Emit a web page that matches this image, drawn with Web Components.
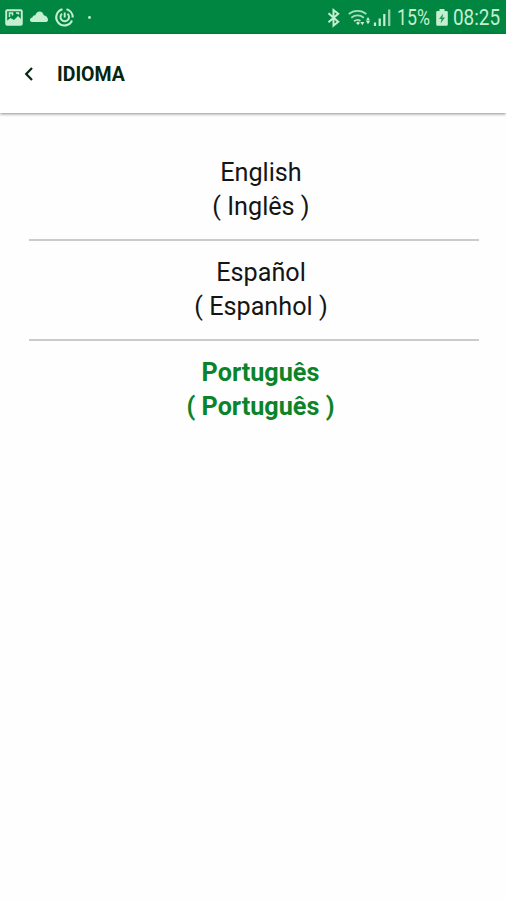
<!DOCTYPE html>
<html lang="pt">
<head>
<meta charset="utf-8">
<title>Idioma</title>
<style>
  body {
    margin: 0;
    background: #fefefe;
    font-family: Roboto, "Liberation Sans", sans-serif;
  }
</style>
</head>
<body>
<status-bar battery="15%" time="08:25"></status-bar>
<app-header>IDIOMA</app-header>
<language-list>
  <language-item>English<span slot="translation">( Inglês )</span></language-item>
  <language-item>Español<span slot="translation">( Espanhol )</span></language-item>
  <language-item selected>Português<span slot="translation">( Português )</span></language-item>
</language-list>

<script>
class StatusBar extends HTMLElement {
  constructor() {
    super();
    this.attachShadow({ mode: "open" });
    this.shadowRoot.innerHTML = `
      <style>${this.#cssStyles()}</style>
      <svg width="100" height="34" viewBox="0 0 100 34" fill="none" stroke="currentColor">
        <rect x="6.2" y="10.2" width="15.6" height="14.6" rx="1" stroke-width="1.9"/>
        <path d="M6 21.5l4.5-3.5 3.5 2 4-4 4 4v5H6z" fill="currentColor" stroke="none"/>
        <path d="M9.5 17v-4h3v2.5M16 13h2.5v1.5" stroke-width="1.5"/>
        <path d="M32 22c-1.3 0-2-.8-2-2 0-1.3 1-2.3 2.4-2.5.5-1.8 1.5-2.5 2.9-2.3 1-2.5 2.3-3.7 4.2-3.7 2.3 0 3.8 1.5 4.2 3.8 2.4.2 4.3 2.3 4.3 4.5 0 1.5-.8 2.2-2 2.2z" fill="currentColor" stroke="none"/>
        <path d="M62.5 9.3A8.2 8.2 0 1 0 72 20.5M66.5 9.3A8.2 8.2 0 0 1 72.7 17.5" stroke-width="2.1"/>
        <path d="M62 13.7a4.3 4.3 0 1 0 5.5 0M64.7 12.5v5" stroke-width="1.9"/>
        <circle cx="89.5" cy="17.5" r="1.4" fill="currentColor" stroke="none"/>
      </svg>
      <div class="right">
        <svg width="70" height="34" viewBox="325 0 70 34" fill="none" stroke="currentColor">
          <path d="M328.5 13.3l9.7 8.4-4.7 4V10l4.7 3.8-9.7 8.4" stroke-width="2"/>
          <path d="M348.8 14c5-4.3 12.5-4.3 17.5 0M351.3 17.7c3.7-3 8.8-3 12.5 0M354 21.3c2.2-1.8 4.5-1.8 6.5-.3" stroke-width="1.8" opacity=".85"/>
          <path d="M356 23l2-1.5 2 1.5-2 2zM360.3 22h4l-2 3.3zM366 20.5h4l-2-3.5zM366 21h4l-2 3.3z" fill="currentColor" stroke="none"/>
          <path d="M375 22.5V26M379.7 18.5V26M384.3 14v12" stroke-width="2.2"/>
          <path d="M389.2 9.5V26" stroke-width="2.3" opacity=".75"/>
        </svg>
        <span class="battery"></span>
        <svg class="cell" width="14" height="34" viewBox="435 0 14 34">
          <path d="M439.5 9h5v2h2q1.3 0 1.3 1.3v12.2q0 1.3-1.3 1.3h-9q-1.3 0-1.3-1.3V12.3q0-1.3 1.3-1.3h2z" fill="currentColor"/>
          <path d="M443.2 13.5L439 19h2.5l-1 4.5 4.5-6h-2.6z" fill="#008641" opacity=".8"/>
        </svg>
        <span class="time"></span>
      </div>
    `;
    this.shadowRoot.querySelector(".battery").textContent = this.getAttribute("battery");
    this.shadowRoot.querySelector(".time").textContent = this.getAttribute("time");
  }

  #cssStyles() {
    return `
      :host {
        display: flex;
        justify-content: space-between;
        height: 34px;
        background: #008641;
        color: #c6efd1;
      }
      svg { display: block; flex: none; }
      .right { display: flex; width: 181px; }
      span {
        flex: none;
        font-size: 22.5px;
        line-height: 35px;
        white-space: nowrap;
        transform-origin: left;
      }
      .battery { width: 38px; margin-left: 2px; transform: scaleX(.79); }
      .time { width: 47px; margin-left: 4px; transform: scaleX(.84); }
    `;
  }
}

class AppHeader extends HTMLElement {
  constructor() {
    super();
    this.attachShadow({ mode: "open" });
    this.shadowRoot.innerHTML = `
      <style>
        :host {
          display: flex;
          align-items: center;
          gap: 22px;
          box-sizing: border-box;
          height: 79px;
          padding: 1px 23px 0;
          background: #fff;
          box-shadow: 0 1px 3px rgba(0, 0, 0, .45);
          color: #04260f;
        }
        h1 {
          margin: 2px 0 0;
          font-size: 19.5px;
          line-height: 24px;
          font-weight: 700;
        }
      </style>
      <svg width="12" height="14" viewBox="0 0 12 14" fill="none" stroke="currentColor" stroke-width="2.2">
        <path d="M9 1L3.2 7 9 13"/>
      </svg>
      <h1><slot></slot></h1>
    `;
  }
}

class LanguageList extends HTMLElement {
  constructor() {
    super();
    this.attachShadow({ mode: "open" });
    this.shadowRoot.innerHTML = `
      <style>
        :host { display: block; padding: 28px 27px 0 29px; }
      </style>
      <slot></slot>
    `;
  }
}

class LanguageItem extends HTMLElement {
  constructor() {
    super();
    this.attachShadow({ mode: "open" });
    this.shadowRoot.innerHTML = `
      <style>
        :host {
          display: block;
          box-sizing: border-box;
          height: 100px;
          padding: 15px 0 0 14px;
          border-bottom: 2px solid #cbcbcb;
          color: #151515;
          font-size: 25.2px;
          line-height: 34px;
          text-align: center;
        }
        :host([selected]) {
          padding-left: 13px;
          border-bottom: 0;
          color: #0b8429;
          font-weight: 700;
        }
      </style>
      <div><slot></slot></div>
      <div><slot name="translation"></slot></div>
    `;
  }
}

customElements.define("status-bar", StatusBar);
customElements.define("app-header", AppHeader);
customElements.define("language-list", LanguageList);
customElements.define("language-item", LanguageItem);
</script>
</body>
</html>
